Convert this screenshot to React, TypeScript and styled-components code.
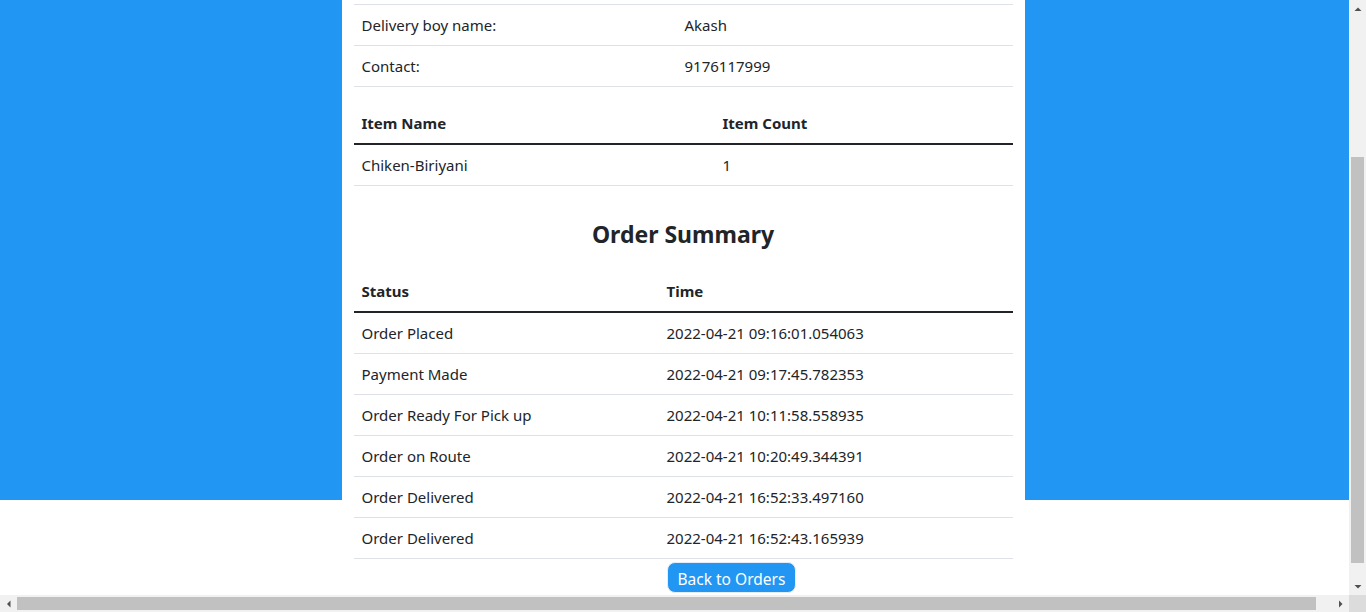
import React from "react";
import styled, { createGlobalStyle } from "styled-components";

const GlobalStyle = createGlobalStyle`
  body {
    margin: 0;
    font-family: "Noto Sans", "Open Sans", sans-serif;
    font-size: 15px;
    line-height: 24px;
    color: #212529;
    background: #ffffff;
  }
  * { box-sizing: border-box; }
`;

const Page = styled.div`
  display: grid;
  grid-template-columns: 100%;
  width: 100%;
`;

const Band = styled.section`
  grid-area: 1 / 1;
  height: 500px;
  background: #2196f3;
`;

const Card = styled.main`
  grid-area: 1 / 1;
  z-index: 1;
  justify-self: center;
  align-self: start;
  width: 50%;
  background: #ffffff;
  padding: 4px 12px 0;
`;

const Table = styled.table<{ $topRule?: boolean; $last?: boolean }>`
  width: 100%;
  border-collapse: collapse;
  margin-bottom: ${(p) => (p.$last ? "0" : "16px")};
  ${(p) => (p.$topRule ? "border-top: 1px solid #dee2e6;" : "")}
`;

const Head = styled.thead`
  border-bottom: 2px solid #212529;
`;

const Th = styled.th<{ $w?: number }>`
  text-align: left;
  font-weight: 700;
  padding: 8px;
  height: 40px;
  ${(p) => (p.$w ? `width: ${p.$w}px;` : "")}
`;

const Tr = styled.tr`
  border-bottom: 1px solid #dee2e6;
`;

const Td = styled.td<{ $w?: number }>`
  padding: 8px;
  height: 40px;
  ${(p) => (p.$w ? `width: ${p.$w}px;` : "")}
`;

const Title = styled.h4`
  margin: 34px 0 22px;
  font-size: 23px;
  line-height: 29px;
  font-weight: 700;
  text-align: center;
`;

const ButtonRow = styled.div`
  padding-left: 313px;
  margin-top: 3px;
`;

const Button = styled.button`
  font-family: inherit;
  font-size: 15.5px;
  line-height: 24px;
  white-space: nowrap;
  color: #ffffff;
  background: #2196f3;
  border: 1px solid #e4eefa;
  border-radius: 8px;
  padding: 3px 10px 1px;
  height: 31px;
  min-width: 127px;
  cursor: pointer;
`;

/* Browser scrollbars shown in the screenshot, drawn over the page */
const VBar = styled.div`
  position: fixed;
  top: 0;
  right: 0;
  width: 17px;
  height: 595px;
  background: #f1f1f1;
  display: flex;
  flex-direction: column;
  align-items: center;
  z-index: 5;
`;

const HBar = styled.div`
  position: fixed;
  left: 0;
  bottom: 0;
  width: 1349px;
  height: 17px;
  background: #f1f1f1;
  display: flex;
  align-items: center;
  z-index: 5;
`;

const Corner = styled.div`
  position: fixed;
  right: 0;
  bottom: 0;
  width: 17px;
  height: 17px;
  background: #dcdcdc;
  z-index: 5;
`;

const ArrowBox = styled.div`
  width: 17px;
  height: 17px;
  flex: none;
  display: flex;
  align-items: center;
  justify-content: center;
`;

const VThumb = styled.div<{ $offset: number; $size: number }>`
  flex: none;
  width: 13px;
  margin-top: ${(p) => p.$offset}px;
  height: ${(p) => p.$size}px;
  background: #c1c1c1;
`;

const HThumb = styled.div<{ $size: number }>`
  flex: none;
  height: 13px;
  width: ${(p) => p.$size}px;
  background: #c1c1c1;
`;

const Fill = styled.div`
  flex: 1;
`;

const Arrow = ({ dir }: { dir: "up" | "down" | "left" | "right" }) => {
  const pts = {
    up: "4,1.5 7.5,5 0.5,5",
    down: "0.5,1 7.5,1 4,4.5",
    left: "4.5,0.5 4.5,7.5 1,4",
    right: "1,0.5 1,7.5 4.5,4",
  }[dir];
  const horiz = dir === "left" || dir === "right";
  return (
    <ArrowBox>
      <svg width={horiz ? 6 : 8} height={horiz ? 8 : 6} viewBox={horiz ? "0 0 6 8" : "0 0 8 6"}>
        <polygon points={pts} fill="#505050" />
      </svg>
    </ArrowBox>
  );
};

const info = [
  ["Delivery boy name:", "Akash"],
  ["Contact:", "9176117999"],
];

const items = [["Chiken-Biriyani", "1"]];

const summary = [
  ["Order Placed", "2022-04-21 09:16:01.054063"],
  ["Payment Made", "2022-04-21 09:17:45.782353"],
  ["Order Ready For Pick up", "2022-04-21 10:11:58.558935"],
  ["Order on Route", "2022-04-21 10:20:49.344391"],
  ["Order Delivered", "2022-04-21 16:52:33.497160"],
  ["Order Delivered", "2022-04-21 16:52:43.165939"],
];

export default function App() {
  return (
    <>
      <GlobalStyle />
      <Page>
        <Band />
        <Card>
          <Table $topRule>
            <tbody>
              {info.map(([k, v]) => (
                <Tr key={k}>
                  <Td $w={323}>{k}</Td>
                  <Td>{v}</Td>
                </Tr>
              ))}
            </tbody>
          </Table>

          <Table>
            <Head>
              <tr>
                <Th $w={361}>Item Name</Th>
                <Th>Item Count</Th>
              </tr>
            </Head>
            <tbody>
              {items.map(([n, c]) => (
                <Tr key={n}>
                  <Td $w={361}>{n}</Td>
                  <Td>{c}</Td>
                </Tr>
              ))}
            </tbody>
          </Table>

          <Title>Order Summary</Title>

          <Table $last>
            <Head>
              <tr>
                <Th $w={305}>Status</Th>
                <Th>Time</Th>
              </tr>
            </Head>
            <tbody>
              {summary.map(([s, t], i) => (
                <Tr key={i}>
                  <Td $w={305}>{s}</Td>
                  <Td>{t}</Td>
                </Tr>
              ))}
            </tbody>
          </Table>

          <ButtonRow>
            <Button type="button">Back to Orders</Button>
          </ButtonRow>
        </Card>
      </Page>

      <VBar>
        <Arrow dir="up" />
        <VThumb $offset={140} $size={406} />
        <Fill />
        <Arrow dir="down" />
      </VBar>
      <HBar>
        <Arrow dir="left" />
        <HThumb $size={1299} />
        <Fill />
        <Arrow dir="right" />
      </HBar>
      <Corner />
    </>
  );
}
